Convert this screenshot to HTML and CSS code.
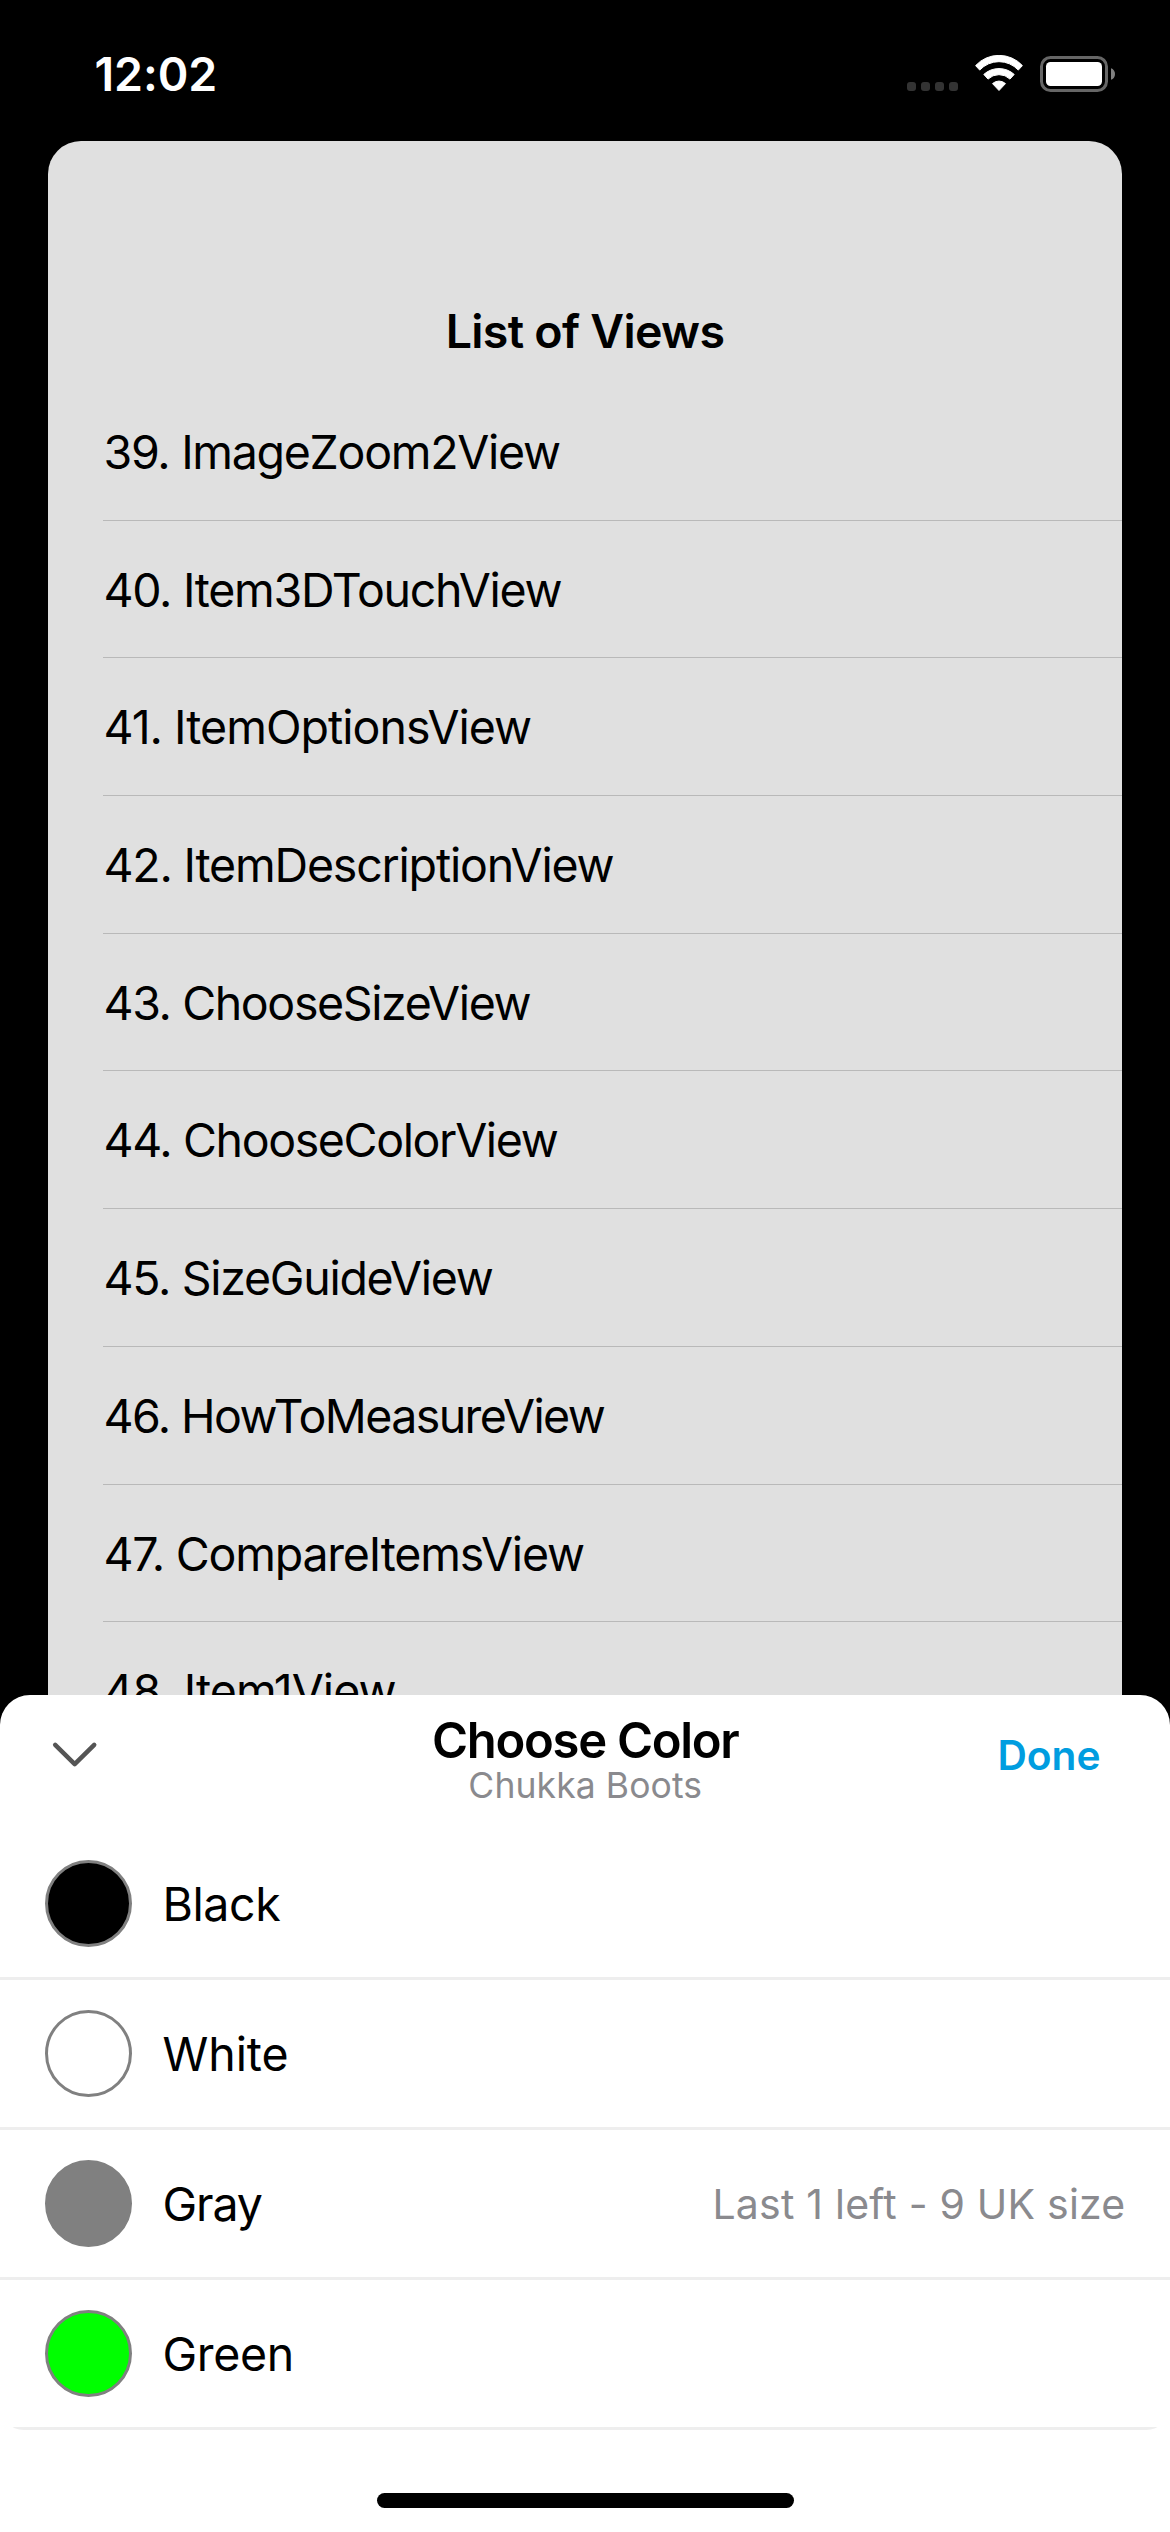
FILE: index.html
```html
<!DOCTYPE html>
<html lang="en">
<head>
<meta charset="utf-8">
<title>Choose Color</title>
<link rel="stylesheet" href="styles.css">
</head>
<body>
<div class="screen">
  <header class="status">
    <span class="time">12:02</span>
    <div class="indicators">
      <svg width="51" height="37" viewBox="0 0 51 37" fill="#333">
        <rect x="0" y="27" width="9" height="9" rx="3"/>
        <rect x="14" y="27" width="9" height="9" rx="3"/>
        <rect x="28" y="27" width="9" height="9" rx="3"/>
        <rect x="42" y="27" width="9" height="9" rx="3"/>
      </svg>
      <svg width="48" height="37" viewBox="0 0 48 37" fill="#fff" stroke="#fff" stroke-width="1" stroke-linejoin="round">
        <path d="M.6 10.6A31.8 31.8 0 0 1 47.4 10.6L43.3 15.1A26.3 26.3 0 0 0 4.7 15.1Z"/>
        <path d="M8.8 19.4A22.7 22.7 0 0 1 39.2 19.4L35 24.1A15.8 15.8 0 0 0 13 24.1Z"/>
        <path d="M17.5 28.6A9.6 9.6 0 0 1 30.5 28.6L24 35.5Z"/>
      </svg>
      <svg width="75" height="37" viewBox="0 0 75 37">
        <rect x="1.5" y="2.5" width="65" height="33" rx="9" fill="none" stroke="#666" stroke-width="3"/>
        <rect x="6" y="7" width="56" height="24" rx="4.5" fill="#fff"/>
        <path d="M71 13.2C73.5 14 75 16.2 75 19S73.5 24 71 24.8Z" fill="#808080"/>
      </svg>
    </div>
  </header>

  <main class="card">
    <h1 class="card-title">List of Views</h1>
    <ul class="views">
      <li>39. ImageZoom2View</li>
      <li>40. Item3DTouchView</li>
      <li class="loose">41. ItemOptionsView</li>
      <li class="relaxed">42. ItemDescriptionView</li>
      <li class="snug">43. ChooseSizeView</li>
      <li class="snug">44. ChooseColorView</li>
      <li>45. SizeGuideView</li>
      <li class="tight">46. HowToMeasureView</li>
      <li class="relaxed">47. CompareItemsView</li>
      <li class="loose">48. Item1View</li>
    </ul>
  </main>

  <section class="sheet">
    <header class="sheet-head">
      <svg class="chevron" width="60" height="60" viewBox="0 0 60 60" fill="none" stroke="#555" stroke-width="4.5" stroke-linecap="round" stroke-linejoin="round">
        <path d="M10.2 19.8L29.7 39.2L49.2 19.8"/>
      </svg>
      <div class="heading">
        <h2>Choose Color</h2>
        <p>Chukka Boots</p>
      </div>
      <span class="done">Done</span>
    </header>
    <ul class="colors">
      <li><i class="swatch black"></i><span class="name black-name">Black</span></li>
      <li><i class="swatch white"></i><span class="name white-name">White</span></li>
      <li><i class="swatch gray"></i><span class="name gray-name">Gray</span><span class="note">Last 1 left - 9 UK size</span></li>
      <li><i class="swatch green"></i><span class="name">Green</span></li>
    </ul>
    <div class="home-bar"></div>
  </section>
</div>
</body>
</html>
```
FILE: styles.css
```css
* { box-sizing: border-box; margin: 0; padding: 0; }

body {
  background: #000;
  font-family: Inter, "Liberation Sans", sans-serif;
  color: #000;
}

ul { list-style: none; }
svg { display: block; }

.screen {
  width: 1170px;
  height: 2532px;
  display: flex;
  flex-direction: column;
  overflow: hidden;
}

/* Status bar */
.status {
  height: 141px;
  flex: none;
  display: flex;
  justify-content: space-between;
  align-items: flex-start;
  padding: 44px 55px 0 94.5px;
}
.time {
  color: #fff;
  font-size: 46.5px;
  font-weight: 580;
  line-height: 60px;
  letter-spacing: -0.1px;
}
.indicators {
  display: flex;
  gap: 17px;
  margin-top: 11px;
}

/* Background card */
.card {
  height: 1554px;
  flex: none;
  margin: 0 48px;
  background: #e0e0e0;
  border-radius: 33px 33px 0 0;
  overflow: hidden;
}
.card-title {
  height: 242px;
  padding-top: 160px;
  text-align: center;
  font-size: 46.5px;
  font-weight: 580;
  line-height: 60px;
  letter-spacing: -0.7px;
}
.views { padding-left: 55px; }
.views li {
  height: 137.7px;
  padding-left: 0.5px;
  border-bottom: 1px solid #b9b9b9;
  font-size: 46.5px;
  line-height: 139.7px;
  letter-spacing: -1.3px;
  white-space: nowrap;
}
.views .loose { letter-spacing: -0.98px; }
.views .relaxed { letter-spacing: -1.2px; }
.views .snug { letter-spacing: -1.38px; }
.views .tight { letter-spacing: -1.57px; }

/* Bottom sheet */
.sheet {
  flex: 1;
  background: #fff;
  border-radius: 30px 30px 0 0;
}
.sheet-head {
  height: 135px;
  display: grid;
  grid-template-columns: 1fr auto 1fr;
  align-items: start;
  padding: 0 69.5px 0 45px;
}
.chevron { margin-top: 30px; }
.heading {
  padding-top: 23px;
  margin-left: 25px;
  text-align: center;
}
.heading h2 {
  font-size: 49px;
  font-weight: 580;
  line-height: 46px;
  letter-spacing: -1.3px;
}
.heading p {
  color: #8a8a8e;
  font-size: 35.5px;
  line-height: 44px;
  letter-spacing: 0.1px;
}
.done {
  margin-top: 31px;
  text-align: right;
  color: #009de0;
  font-size: 40.7px;
  font-weight: 580;
  line-height: 60px;
}

.colors {
  overflow: hidden;
  border-radius: 0 0 24px 24px;
}
.colors li {
  height: 150px;
  display: flex;
  align-items: center;
  gap: 30.5px;
  padding: 0 44.5px 0 45px;
  border-bottom: 3px solid #eee;
}
.swatch {
  width: 87px;
  height: 87px;
  border: 3px solid #808080;
  border-radius: 50%;
}
.black { background: #000; }
.white { background: #fff; }
.gray { background: #808080; }
.green { background: #0f0; }
.name {
  font-size: 46.5px;
  letter-spacing: -0.34px;
}
.black-name { letter-spacing: -0.42px; }
.white-name { letter-spacing: -0.08px; }
.gray-name { letter-spacing: -1.1px; }
.note {
  margin-left: auto;
  color: #8a8a8e;
  font-size: 41px;
  letter-spacing: 0.22px;
}

.home-bar {
  width: 417px;
  height: 15px;
  margin: 63px auto 0;
  border-radius: 7.5px;
  background: #000;
}
```
